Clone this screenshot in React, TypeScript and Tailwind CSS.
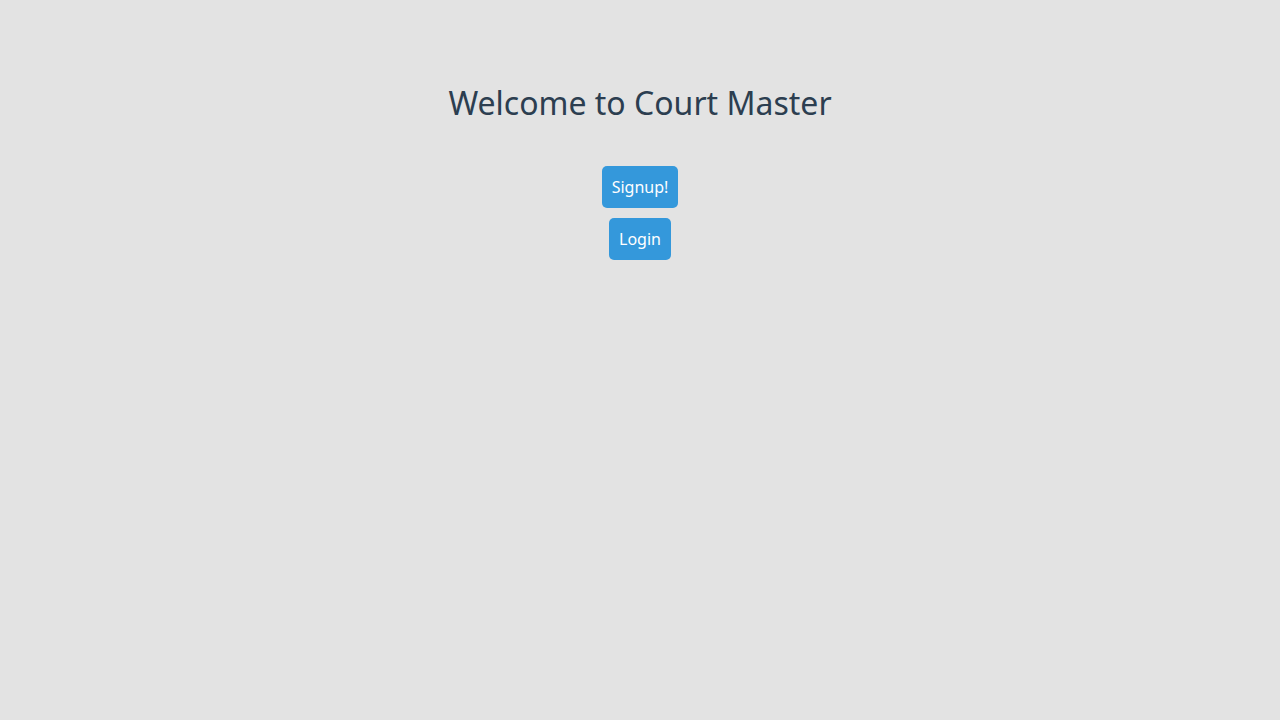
export default function App() {
  return (
    <div className="min-h-screen bg-[#e3e3e3] font-['Noto_Sans',sans-serif] flex flex-col items-center pt-[80px]">
      <h1 className="text-[32px] leading-[46px] font-normal text-[#2c3e50]">
        Welcome to Court Master
      </h1>
      <div className="mt-[40px] flex flex-col items-center gap-[10px]">
        <button className="bg-[#3498db] text-white text-[16px] leading-[22px] px-[10px] py-[10px] rounded-[5px]">
          Signup!
        </button>
        <button className="bg-[#3498db] text-white text-[16px] leading-[22px] px-[10px] py-[10px] rounded-[5px]">
          Login
        </button>
      </div>
    </div>
  );
}
